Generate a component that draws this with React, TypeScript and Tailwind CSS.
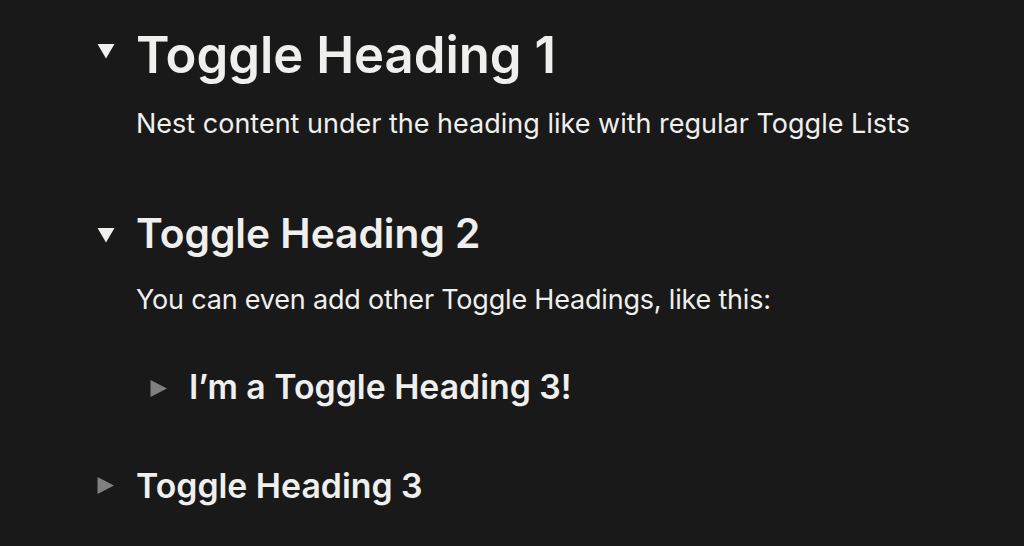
type Level = 1 | 2 | 3;

const HEADING_CLASS: Record<Level, string> = {
  1: 'text-[50.8px] leading-[65px]',
  2: 'text-[40.7px] leading-[52px]',
  3: 'text-[33.8px] leading-[44px]',
};

// small filled triangle used as the toggle arrow
function Arrow({ open }: { open: boolean }) {
  return open ? (
    <svg width="18" height="16" viewBox="0 0 18 16" className="block fill-[#efefed]">
      <polygon points="0.5,1 17.5,1 9,15.5" />
    </svg>
  ) : (
    <svg width="17" height="17" viewBox="0 0 17 17" className="block fill-[#808080]">
      <polygon points="0.5,0 17,8.5 0.5,17" />
    </svg>
  );
}

function ToggleHeading({
  level, title, open, arrowTop, children,
}: {
  level: Level;
  title: string;
  open: boolean;
  arrowTop: string;
  children?: React.ReactNode;
}) {
  return (
    <div className="flex flex-col">
      <div className="flex">
        <div className={`w-[39px] shrink-0 ${arrowTop}`}>
          <Arrow open={open} />
        </div>
        <h2 className={`${HEADING_CLASS[level]} font-semibold whitespace-nowrap`}>{title}</h2>
      </div>
      {open && children}
    </div>
  );
}

export default function App() {
  return (
    <div className="min-h-screen bg-[#191919] text-[#efefed] font-['Inter',sans-serif] pl-[97px] pt-[22px] overflow-hidden">
      <ToggleHeading level={1} title="Toggle Heading 1" open arrowTop="pt-[21px]">
        <p className="pl-[39px] mt-[17px] text-[27px] leading-[40px] whitespace-nowrap">
          Nest content under the heading like with regular Toggle Lists
        </p>
      </ToggleHeading>

      <div className="mt-[64px]">
        <ToggleHeading level={2} title="Toggle Heading 2" open arrowTop="pt-[19px]">
          <div className="pl-[39px] mt-[20px] flex flex-col">
            <p className="text-[27px] leading-[40px] tracking-[-0.2px] whitespace-nowrap">
              You can even add other Toggle Headings, like this:
            </p>
            <div className="mt-[45px] ml-[14px]">
              <ToggleHeading level={3} title="I’m a Toggle Heading 3!" open={false} arrowTop="pt-[15px]" />
            </div>
          </div>
        </ToggleHeading>
      </div>

      <div className="mt-[55px]">
        <ToggleHeading level={3} title="Toggle Heading 3" open={false} arrowTop="pt-[13px]" />
      </div>
    </div>
  );
}
